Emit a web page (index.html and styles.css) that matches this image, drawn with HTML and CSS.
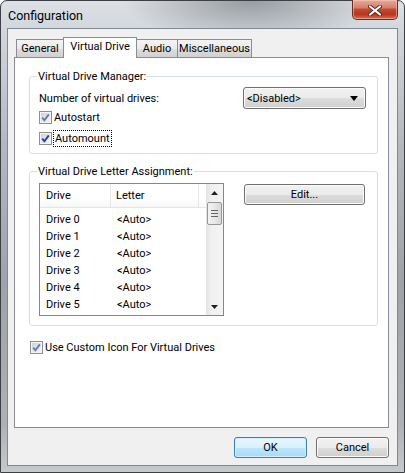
FILE: index.html
```html
<!DOCTYPE html>
<html lang="en">
<head>
    <meta charset="UTF-8">
    <title>Configuration</title>
    <link rel="stylesheet" href="styles.css">
</head>
<body>
    <div class="window">
        <div class="titlebar">
            <span class="title">Configuration</span>
            <button class="close" aria-label="Close">
                <svg width="14" height="11" viewBox="0 0 14 11">
                    <path d="M2 1.5 L12 9.5 M12 1.5 L2 9.5" stroke="#5a2a22" stroke-width="4" stroke-linecap="round"/>
                    <path d="M2 1.5 L12 9.5 M12 1.5 L2 9.5" stroke="#fff" stroke-width="2.2" stroke-linecap="round"/>
                </svg>
            </button>
        </div>

        <div class="client">
            <div class="tabs">
                <div class="tab tab-general">General</div>
                <div class="tab tab-drive active">Virtual Drive</div>
                <div class="tab tab-audio">Audio</div>
                <div class="tab tab-misc">Miscellaneous</div>
            </div>

            <div class="panel">
                <!-- Virtual Drive Manager -->
                <fieldset class="group manager">
                    <legend>Virtual Drive Manager:</legend>
                    <div class="row">
                        <span>Number of virtual drives:</span>
                        <div class="combo">
                            <span>&lt;Disabled&gt;</span>
                            <svg width="8" height="5" viewBox="0 0 8 5"><path d="M0 0 H8 L4 5 Z" fill="#000"/></svg>
                        </div>
                    </div>
                    <label class="check">
                        <span class="box"><svg width="11" height="11" viewBox="0 0 11 11"><path d="M2.2 5.6 L4.4 8.2 L8.8 2.4" fill="none" stroke="#6478b4" stroke-width="1.8"/></svg></span>
                        <span>Autostart</span>
                    </label>
                    <label class="check">
                        <span class="box"><svg width="11" height="11" viewBox="0 0 11 11"><path d="M2.2 5.6 L4.4 8.2 L8.8 2.4" fill="none" stroke="#2142a8" stroke-width="1.9"/></svg></span>
                        <span class="focused">Automount</span>
                    </label>
                </fieldset>

                <!-- Drive letters -->
                <fieldset class="group letters">
                    <legend>Virtual Drive Letter Assignment:</legend>
                    <div class="list-row">
                        <div class="listview">
                            <div class="list-main">
                                <div class="list-head">
                                    <span class="col-drive">Drive</span>
                                    <span class="col-letter">Letter</span>
                                </div>
                                <div class="list-body">
                                    <div class="item"><span class="col-drive">Drive 0</span><span class="col-letter">&lt;Auto&gt;</span></div>
                                    <div class="item"><span class="col-drive">Drive 1</span><span class="col-letter">&lt;Auto&gt;</span></div>
                                    <div class="item"><span class="col-drive">Drive 2</span><span class="col-letter">&lt;Auto&gt;</span></div>
                                    <div class="item"><span class="col-drive">Drive 3</span><span class="col-letter">&lt;Auto&gt;</span></div>
                                    <div class="item"><span class="col-drive">Drive 4</span><span class="col-letter">&lt;Auto&gt;</span></div>
                                    <div class="item"><span class="col-drive">Drive 5</span><span class="col-letter">&lt;Auto&gt;</span></div>
                                </div>
                            </div>
                            <div class="scrollbar">
                                <div class="arrow"><svg width="7" height="4" viewBox="0 0 7 4"><path d="M0 4 L3.5 0 L7 4 Z" fill="#222"/></svg></div>
                                <div class="thumb"><span></span><span></span><span></span></div>
                                <div class="track"></div>
                                <div class="arrow"><svg width="7" height="4" viewBox="0 0 7 4"><path d="M0 0 H7 L3.5 4 Z" fill="#222"/></svg></div>
                            </div>
                        </div>
                        <button class="btn edit">Edit...</button>
                    </div>
                </fieldset>

                <label class="check custom">
                    <span class="box"><svg width="11" height="11" viewBox="0 0 11 11"><path d="M2.2 5.6 L4.4 8.2 L8.8 2.4" fill="none" stroke="#6478b4" stroke-width="1.8"/></svg></span>
                    <span>Use Custom Icon For Virtual Drives</span>
                </label>
            </div>

            <div class="buttons">
                <button class="btn default">OK</button>
                <button class="btn">Cancel</button>
            </div>
        </div>
    </div>
</body>
</html>
```

FILE: styles.css
```css
* {
    box-sizing: border-box;
}
body {
    margin: 0;
    font-family: Roboto, "Noto Sans", sans-serif;
    font-size: 11px;
    color: #000;
    background: #fff;
}
.window {
    width: 405px;
    height: 473px;
    border: 1px solid #3c4045;
    border-radius: 7px 7px 0 0;
    padding: 0 6px 6px;
    display: flex;
    flex-direction: column;
    background:
        radial-gradient(ellipse 130px 40px at 62% 0, rgba(95, 100, 106, 0.55), rgba(95, 100, 106, 0)),
        linear-gradient(to bottom, #dde1e6 0, #d2d7dd 6%, #b4b9bf 30%, #9ea3a9 60%, #aeb2b6 90%, #c6c9cc 100%);
}
.titlebar {
    height: 27px;
    display: flex;
    align-items: flex-start;
    justify-content: space-between;
}
.title {
    padding: 7px 0 0 1px;
    line-height: 15px;
    font-size: 12.5px;
}
.close {
    width: 46px;
    height: 20px;
    margin-top: -1px;
    border: 1px solid #6b2a20;
    border-top: none;
    border-radius: 0 0 5px 5px;
    padding: 1px 0 0;
    display: flex;
    align-items: center;
    justify-content: center;
    background: linear-gradient(to bottom, #e9a99b 0, #d47f6c 40%, #c14a33 50%, #b8351d 75%, #d46f55 100%);
    box-shadow: inset 0 0 0 1px rgba(255, 210, 200, 0.5);
}
.client {
    flex: 1;
    border: 1px solid #7f8993;
    background: #f0f0f0;
    padding: 8px 8px 7px 6px;
    display: flex;
    flex-direction: column;
}

/* tabs */
.tabs {
    display: flex;
    align-items: flex-end;
    padding-left: 2px;
    height: 20px;
}
.tab {
    height: 18px;
    line-height: 17px;
    text-align: center;
    white-space: nowrap;
    border: 1px solid #898c95;
    border-bottom: none;
    border-right: none;
    background: linear-gradient(to bottom, #f3f3f3 0, #ebebeb 50%, #dedede 51%, #d0d0d0 100%);
}
.tab-general { width: 47px; }
.tab-audio { width: 40px; border-left: none; }
.tab-misc { width: 75px; border-right: 1px solid #898c95; }
.tab.active {
    width: 74px;
    height: 21px;
    margin-bottom: -1px;
    line-height: 18px;
    background: #fff;
    border-right: 1px solid #898c95;
    position: relative;
    z-index: 1;
}
.panel {
    height: 371px;
    border: 1px solid #898c95;
    background: #fff;
    padding: 11px 10px 0 14px;
}

/* group boxes */
.group {
    margin: 0;
    border: 1px solid #d5dfe5;
    border-radius: 3px;
    min-width: 0;
}
.group legend {
    padding: 0 1px;
    margin-left: -2px;
    line-height: 15px;
}
.manager {
    padding: 3px 11px 8px 9px;
}
.row {
    display: flex;
    align-items: center;
    justify-content: space-between;
    height: 22px;
}
.combo {
    width: 123px;
    height: 22px;
    border: 1px solid #707070;
    border-radius: 3px;
    display: flex;
    align-items: center;
    justify-content: space-between;
    padding: 0 7px 0 3px;
    background: linear-gradient(to bottom, #f2f2f2 0, #ebebeb 50%, #dddddd 51%, #cfcfcf 100%);
    box-shadow: inset 0 0 0 1px #fafafa;
}
.check {
    display: flex;
    align-items: center;
    height: 13px;
    margin-top: 8px;
    line-height: 15px;
}
.manager .row + .check {
    margin-top: 2px;
}
.box {
    width: 13px;
    height: 13px;
    margin-right: 2px;
    border: 1px solid #8e8f8f;
    background: linear-gradient(135deg, #c9ccd1 0, #e4e5e7 50%, #f7f7f7 100%);
    box-shadow: inset 0 0 0 1px #f4f4f4;
    display: flex;
    align-items: center;
    justify-content: center;
}
.focused {
    outline: 1px dotted #000;
    outline-offset: 0;
    padding: 0 1px;
}
.letters {
    margin-top: 10px;
    padding: 4px 12px 9px 9px;
}
.list-row {
    display: flex;
    align-items: flex-start;
}
.listview {
    width: 185px;
    height: 133px;
    border: 1px solid #828790;
    background: #fff;
    display: flex;
    overflow: hidden;
}
.list-main {
    flex: 1;
}
.list-head {
    height: 24px;
    display: flex;
    border-bottom: 1px solid #e5e5e5;
    line-height: 24px;
    background: linear-gradient(to bottom, #fff 0, #fff 60%, #f7f8f9 100%);
}
.list-head span {
    border-right: 1px solid #e3e5e8;
}
.col-drive {
    width: 71px;
    padding-left: 6px;
}
.col-letter {
    width: 88px;
    padding-left: 5px;
}
.list-body {
    padding-top: 3px;
}
.item {
    display: flex;
    height: 17px;
    line-height: 17px;
}
.item .col-letter {
    padding-left: 6px;
}
.scrollbar {
    width: 17px;
    display: flex;
    flex-direction: column;
    background: linear-gradient(to right, #e3e3e3 0, #f0f0f0 30%, #f4f4f4 100%);
}
.arrow {
    height: 17px;
    display: flex;
    align-items: center;
    justify-content: center;
}
.thumb {
    height: 23px;
    margin: 1px 1px 0;
    border: 1px solid #979797;
    border-radius: 2px;
    background: linear-gradient(to right, #f3f3f3 0, #e8e8e8 50%, #d8d8d8 100%);
    display: flex;
    flex-direction: column;
    align-items: center;
    justify-content: center;
    gap: 2px;
}
.thumb span {
    width: 7px;
    height: 1px;
    background: #666;
}
.track {
    flex: 1;
}
.btn {
    font-family: inherit;
    font-size: 11px;
    color: #000;
    height: 21px;
    padding: 0;
    border: 1px solid #707070;
    border-radius: 3px;
    background: linear-gradient(to bottom, #f2f2f2 0, #ebebeb 50%, #dddddd 51%, #cfcfcf 100%);
    box-shadow: inset 0 0 0 1px #fbfbfb;
}
.edit {
    width: 121px;
    margin: 1px 0 0 20px;
}
.custom {
    margin: 15px 0 0 1px;
}
.buttons {
    display: flex;
    justify-content: flex-end;
    gap: 9px;
    margin-top: 9px;
}
.buttons .btn {
    width: 73px;
}
.btn.default {
    border-color: #3c7fb1;
    background: linear-gradient(to bottom, #eaf6fd 0, #d9f0fc 50%, #bee6fd 51%, #a7d9f5 100%);
    box-shadow: inset 0 0 0 1px #d0eefe;
}
```
